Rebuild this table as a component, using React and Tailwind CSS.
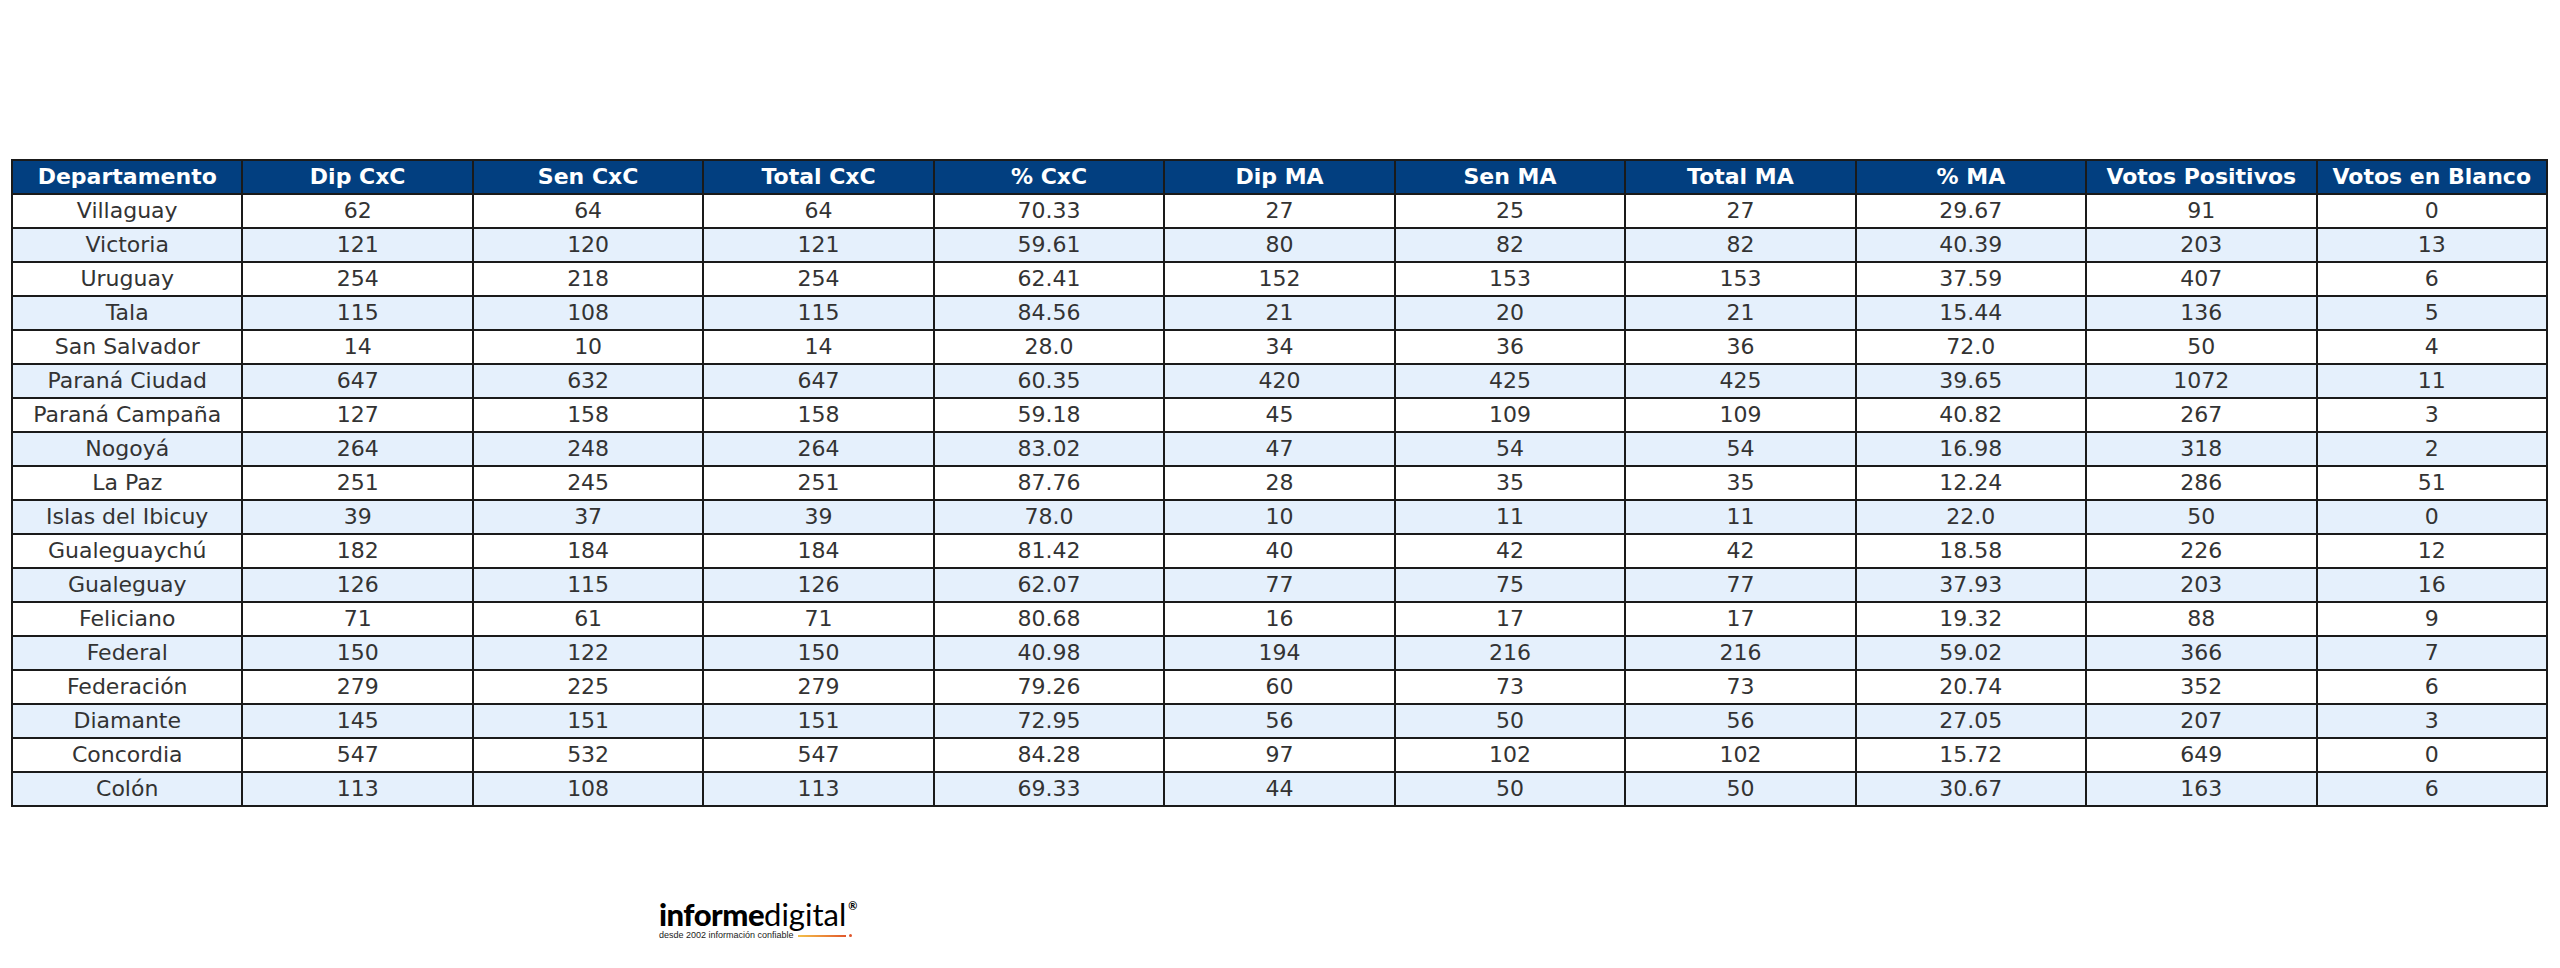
import React from "react";

const headers = ["Departamento","Dip CxC","Sen CxC","Total CxC","% CxC","Dip MA","Sen MA","Total MA","% MA","Votos Positivos","Votos en Blanco"];
const rows = [
["Villaguay","62","64","64","70.33","27","25","27","29.67","91","0"],
["Victoria","121","120","121","59.61","80","82","82","40.39","203","13"],
["Uruguay","254","218","254","62.41","152","153","153","37.59","407","6"],
["Tala","115","108","115","84.56","21","20","21","15.44","136","5"],
["San Salvador","14","10","14","28.0","34","36","36","72.0","50","4"],
["Paraná Ciudad","647","632","647","60.35","420","425","425","39.65","1072","11"],
["Paraná Campaña","127","158","158","59.18","45","109","109","40.82","267","3"],
["Nogoyá","264","248","264","83.02","47","54","54","16.98","318","2"],
["La Paz","251","245","251","87.76","28","35","35","12.24","286","51"],
["Islas del Ibicuy","39","37","39","78.0","10","11","11","22.0","50","0"],
["Gualeguaychú","182","184","184","81.42","40","42","42","18.58","226","12"],
["Gualeguay","126","115","126","62.07","77","75","77","37.93","203","16"],
["Feliciano","71","61","71","80.68","16","17","17","19.32","88","9"],
["Federal","150","122","150","40.98","194","216","216","59.02","366","7"],
["Federación","279","225","279","79.26","60","73","73","20.74","352","6"],
["Diamante","145","151","151","72.95","56","50","56","27.05","207","3"],
["Concordia","547","532","547","84.28","97","102","102","15.72","649","0"],
["Colón","113","108","113","69.33","44","50","50","30.67","163","6"],
];

export default function App() {
  return (
    <div className="w-[2560px] h-[968px] bg-white flex flex-col font-['DejaVu_Sans',sans-serif]">
      <div className="pt-[159px] pl-[11px]">
        <table className="w-[2537px] table-fixed border-collapse text-[22px] leading-none">
          <thead>
            <tr className="h-[34px] bg-[#023f80]">
              {headers.map((h) => (
                <th key={h} className="border-2 border-[#1a1a1a] text-white font-bold text-center p-0">{h}</th>
              ))}
            </tr>
          </thead>
          <tbody>
            {rows.map((r, i) => (
              <tr key={r[0]} className={i % 2 === 0 ? "h-[34px] bg-white" : "h-[34px] bg-[#e5f0fc]"}>
                {r.map((c, j) => (
                  <td key={j} className="border-2 border-[#1a1a1a] text-[#333333] text-center p-0">{c}</td>
                ))}
              </tr>
            ))}
          </tbody>
        </table>
      </div>
      <div className="pl-[659px] pt-[92px] flex flex-col items-start">
        <div className="flex items-start leading-none font-['Lato',sans-serif] text-black">
          <span className="text-[31px] font-black tracking-[-0.5px]">informe</span>
          <span className="text-[31px] font-normal">digital</span>
          <span className="text-[11px] font-bold ml-[2px] mt-[1px]">®</span>
        </div>
        <div className="flex items-center mt-[1px]">
          <span className="text-[9px] leading-none text-[#222] font-['Liberation_Sans',sans-serif]">desde 2002 información confiable</span>
          <span className="ml-[4px] w-[48px] h-[2px] bg-gradient-to-r from-[#f2c04a] to-[#e0562b]"></span>
          <span className="ml-[3px] w-[3px] h-[3px] rounded-full bg-[#e0562b]"></span>
        </div>
      </div>
    </div>
  );
}
